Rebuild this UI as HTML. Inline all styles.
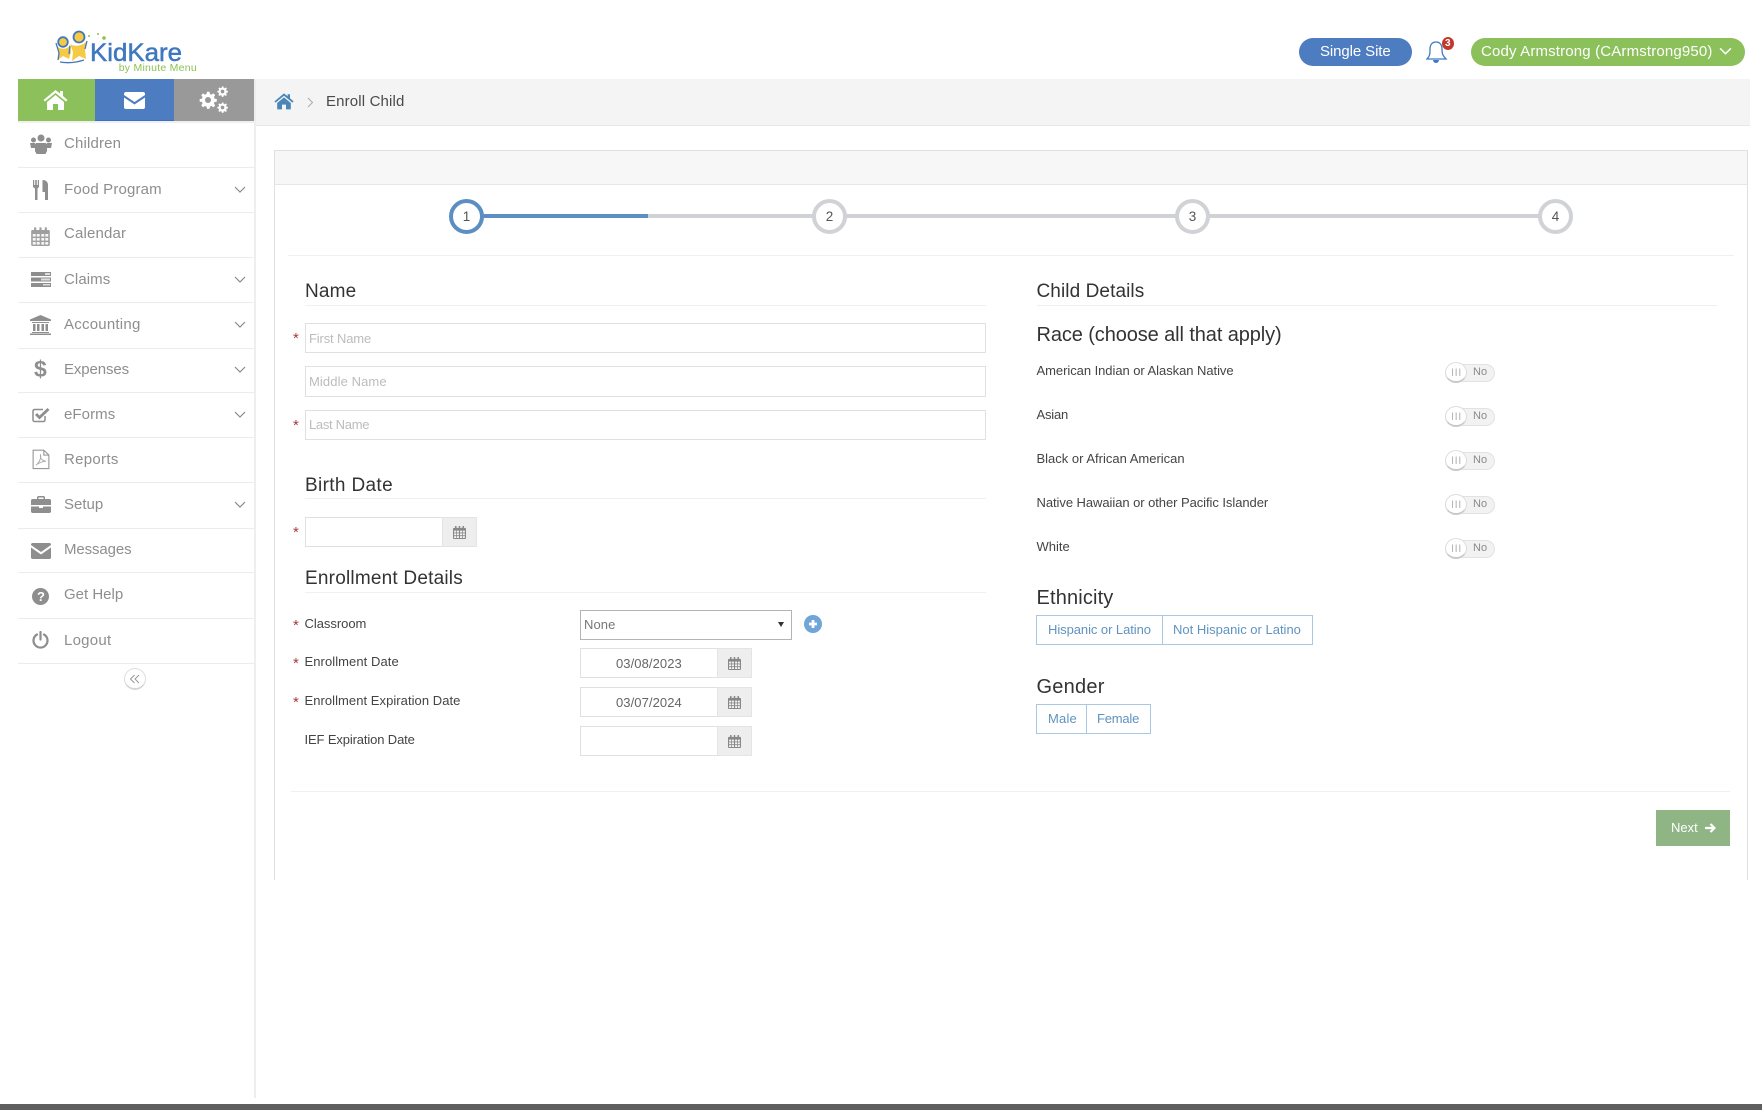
<!DOCTYPE html>
<html lang="en"><head><meta charset="utf-8"><title>Enroll Child</title>
<style>
html,body{margin:0;padding:0;background:#fff}
#r{position:relative;width:1762px;height:1110px;overflow:hidden;background:#fff;font-family:"Liberation Sans",sans-serif;filter:blur(.35px)}
#r div,#r svg{position:absolute}
.t{position:absolute;white-space:nowrap;line-height:20px;height:20px;margin-top:-10px}
.m{font-size:15px;color:#8e8e8e;left:64px;letter-spacing:.16px;margin-top:-9px}
.sep{left:18px;width:236px;height:1px;background:#ececec}
.h{font-size:19px;color:#333}
.rule{height:1px;background:#f0f0f0}
.inp{box-sizing:border-box;border:1px solid #e0e0e0;background:#fff}
.ph{font-size:13px;color:#bcbcbc;left:309px;margin-top:-9px}
.req{font-size:15px;color:#a83a3b;left:293px;margin-top:-11px}
.l{font-size:13px;color:#444;margin-top:-10px}
.add{background:#eee;border:1px solid #e4e4e4;box-sizing:border-box}
.tg{box-sizing:border-box;left:1445px;width:50px;height:18px;border-radius:9px;background:#f2f2f2;border:1px solid #e2e2e2}
.kn{box-sizing:border-box;left:1445px;width:22px;height:21px;border-radius:50%;background:#fff;border:1px solid #ddd;border-bottom:2px solid #c9c9c9}
.no{font-size:11px;color:#8a8a8a;left:1473px}
.bars{font-size:11px;color:#b4b4b4;left:1451px;letter-spacing:.6px;margin-top:-9px}
.b{box-sizing:border-box;border:1px solid #a9c8e4;background:#fff;height:30px}
.bt{font-size:13px;color:#5f93c0;margin-top:-9.500px}
.d{font-size:13px;color:#666;letter-spacing:.08px}
.st{box-sizing:border-box;width:35px;height:35px;border-radius:50%;border:4px solid #d0d2d6;background:#fff;top:199px}
.sn{font-size:13.500px;color:#555;width:20px;text-align:center}
</style></head><body><div id="r">
<svg width="0" height="0" style="left:0;top:0"><defs>
<symbol id="cal" viewBox="0 0 14 15"><path d="M1 3h12a1 1 0 0 1 1 1v10a1 1 0 0 1-1 1H1a1 1 0 0 1-1-1V4a1 1 0 0 1 1-1z" fill="#888"/><path d="M3 1v3M7 1v3M11 1v3" stroke="#888" stroke-width="1.600"/><path d="M1.200 6h2.200v2H1.200zM4.200 6h2.200v2H4.200zM7.600 6h2.200v2H7.600zM10.600 6h2.200v2h-2.200zM1.200 9h2.200v2H1.200zM4.200 9h2.200v2H4.200zM7.600 9h2.200v2H7.600zM10.600 9h2.200v2h-2.200zM1.200 12h2.200v2H1.200zM4.200 12h2.200v2H4.200zM7.600 12h2.200v2H7.600zM10.600 12h2.200v2h-2.200z" fill="#f4f4f4"/></symbol>
<symbol id="chev" viewBox="0 0 12 7"><path d="M1 1l5 5 5-5" fill="none" stroke="#8a8a8a" stroke-width="1.200"/></symbol>
<symbol id="gear" viewBox="0 0 24 24"><path d="M12 1l2 0 .6 3 2 .8 2.600-1.700 2.400 2.400-1.700 2.600.8 2 3 .6 0 3.400-3 .6-.8 2 1.700 2.600-2.400 2.400-2.600-1.700-2 .8-.6 3-3.400 0-.6-3-2-.8-2.600 1.700-2.400-2.400 1.700-2.600-.8-2-3-.6 0-3.400 3-.6.8-2-1.700-2.600 2.400-2.400 2.600 1.700 2-.8.6-3z" fill="#fff"/><circle cx="12" cy="12" r="4" fill="#999"/></symbol>
</defs></svg>

<!-- logo -->
<svg style="left:50px;top:26px" width="155" height="50" viewBox="0 0 155 50">
<path d="M6 19C10 24 17 24 20 19L21 26 19 33 13 30 8 34 9 27Z" fill="#f7ca45"/>
<path d="M20 18C24 21 33 20 37 15L35 24 36 33 29 30 22 35 23 26Z" fill="#f7ca45"/>
<circle cx="13" cy="16" r="4.800" fill="#f7ca45" stroke="#3f78bf" stroke-width="1.800"/>
<circle cx="29" cy="11" r="5.500" fill="#f7ca45" stroke="#3f78bf" stroke-width="1.800"/>
<path d="M6 17L9 27 8 34M20 20L19 28M10 36Q22 38 34 34M37 15L35 23" fill="none" stroke="#3f78bf" stroke-width="1.300"/>
<circle cx="39" cy="10" r="1" fill="#8cc152"/><circle cx="48" cy="8" r="1" fill="#8cc152"/><circle cx="54" cy="12" r="1.800" fill="#8cc152"/>
<text x="40" y="35" font-family="Liberation Sans" font-size="25" stroke="#3f78bf" stroke-width=".5" fill="#3f78bf" textLength="92" lengthAdjust="spacingAndGlyphs">KidKare</text>
<text x="68.700" y="45" font-family="Liberation Sans" font-size="10.500" fill="#8cc152" textLength="78">by Minute Menu</text>
</svg>

<!-- top right -->
<div style="left:1299px;top:38px;width:113px;height:28px;border-radius:14px;background:#4d7cc1"></div>
<span class="t" style="left:1320px;top:52px;font-size:15px;color:#fff;letter-spacing:-.1px">Single Site</span>
<svg style="left:1426px;top:40px" width="22" height="24" viewBox="0 0 22 24"><path d="M10 2c4 0 6 3 6 7 0 5 1 7 4 10H1c3-3 3-5 3-10 0-4 2-7 6-7z" fill="#fff" stroke="#3f78c8" stroke-width="1.300"/><path d="M7 20a3 3 0 0 0 6 0z" fill="#3f78c8"/></svg>
<div style="left:1442px;top:37px;width:12px;height:13px;border-radius:50%;background:#c0392b"></div>
<span class="t" style="left:1445px;top:44px;font-size:10px;color:#fff;font-weight:700">3</span>
<div style="left:1471px;top:38px;width:274px;height:28px;border-radius:14px;background:#8bc05a"></div>
<span class="t" style="left:1481px;top:52px;font-size:15px;color:#fff;letter-spacing:.16px">Cody Armstrong (CArmstrong950)</span>
<svg style="left:1719px;top:47px" width="13" height="8" viewBox="0 0 12 7"><path d="M1 1l5 5 5-5" fill="none" stroke="#fff" stroke-width="1.400"/></svg>

<!-- nav tiles -->
<div style="left:18px;top:79px;width:77px;height:42px;background:#8bc05a"></div>
<div style="left:95px;top:79px;width:79px;height:42px;background:#4d7cc1;border-bottom:1px solid #3b6fc0;box-sizing:border-box"></div>
<div style="left:174px;top:79px;width:80px;height:42px;background:#999"></div>
<div style="left:18px;top:121px;width:236px;height:2px;background:#efefef"></div>
<svg style="left:43px;top:89px" width="25" height="21" viewBox="0 0 25 21"><path d="M12.500 1L0.500 11l1.500 1.500L12.500 4 23 12.500 24.500 11 20 7V2h-3v2.500z" fill="#fff"/><path d="M4 13l8.500-7 8.500 7v8h-6v-6h-5v6H4z" fill="#fff"/></svg>
<svg style="left:124px;top:92px" width="21" height="17" viewBox="0 0 21 17"><path d="M2 0h17a2 2 0 0 1 2 2v1l-10.500 7L0 3V2a2 2 0 0 1 2-2z" fill="#fff"/><path d="M0 5.500l10.500 7 10.500-7V15a2 2 0 0 1-2 2H2a2 2 0 0 1-2-2z" fill="#fff"/></svg>
<svg style="left:199px;top:86px" width="31" height="28" viewBox="0 0 31 28"><use href="#gear" x="0" y="5" width="18" height="18"/><use href="#gear" x="18" y="0" width="11" height="11"/><use href="#gear" x="18" y="16" width="11" height="11"/></svg>

<!-- sidebar -->
<div style="left:254px;top:79px;width:2px;height:1019px;background:#eee"></div>
<span class="t m" style="top:143px">Children</span><div class="sep" style="top:167px"></div>
<span class="t m" style="top:189px">Food Program</span><div class="sep" style="top:212px"></div>
<span class="t m" style="top:233px">Calendar</span><div class="sep" style="top:257px"></div>
<span class="t m" style="top:279px;letter-spacing:.08px">Claims</span><div class="sep" style="top:302px"></div>
<span class="t m" style="top:324px;letter-spacing:.23px">Accounting</span><div class="sep" style="top:348px"></div>
<span class="t m" style="top:369px;letter-spacing:-.1px">Expenses</span><div class="sep" style="top:392px"></div>
<span class="t m" style="top:414px;letter-spacing:.08px">eForms</span><div class="sep" style="top:437px"></div>
<span class="t m" style="top:459px;letter-spacing:.3px">Reports</span><div class="sep" style="top:482px"></div>
<span class="t m" style="top:504px;letter-spacing:0">Setup</span><div class="sep" style="top:528px"></div>
<span class="t m" style="top:549px;letter-spacing:-.1px">Messages</span><div class="sep" style="top:572px"></div>
<span class="t m" style="top:594px;letter-spacing:0">Get Help</span><div class="sep" style="top:618px"></div>
<span class="t m" style="top:640px;letter-spacing:.25px">Logout</span><div class="sep" style="top:663px"></div>

<svg style="left:234px;top:186px" width="12" height="7"><use href="#chev"/></svg>
<svg style="left:234px;top:276px" width="12" height="7"><use href="#chev"/></svg>
<svg style="left:234px;top:321px" width="12" height="7"><use href="#chev"/></svg>
<svg style="left:234px;top:366px" width="12" height="7"><use href="#chev"/></svg>
<svg style="left:234px;top:411px" width="12" height="7"><use href="#chev"/></svg>
<svg style="left:234px;top:501px" width="12" height="7"><use href="#chev"/></svg>

<!-- sidebar icons -->
<svg style="left:30px;top:134px" width="22" height="20" viewBox="0 0 22 20" fill="#8e8e8e"><circle cx="11" cy="4" r="3.500"/><circle cx="3.500" cy="6" r="2.500"/><circle cx="18.500" cy="6" r="2.500"/><path d="M0 9h5l1 5H1zM17 9h5l-1 5h-5zM6 9h10l1 2v6l-1.500 3h-9L5 17v-6z"/></svg>
<svg style="left:33px;top:180px" width="16" height="20" viewBox="0 0 16 20" fill="#8e8e8e"><path d="M0 0h1.200v5h1V0h1.600v5h1V0H6v7l-1.500 1.500V20H2V8.500L0 7z"/><path d="M9.500 0c3.500 0 5.500 2 5.500 5v15h-3v-8H9.500z"/></svg>
<svg style="left:31px;top:226px;opacity:.8" width="19" height="20"><use href="#cal" width="19" height="20"/></svg>
<svg style="left:31px;top:272px" width="20" height="15" viewBox="0 0 20 15" fill="#8e8e8e"><path d="M0 0h20v4H0zM0 5.500h20v4H0zM0 11h20v4H0z"/><path d="M14 1h5v2h-5zM10 6.500h9v2h-9zM12 12h7v1.500h-7z" fill="#ddd"/></svg>
<svg style="left:30px;top:315px" width="21" height="20" viewBox="0 0 21 20" fill="#8e8e8e"><path d="M10.500 0L21 4.500V6H0V4.500z"/><path d="M2 7h17v1H2zM3 9h2.500v7H3zM7 9h2.500v7H7zM11.500 9H14v7h-2.500zM15.500 9H18v7h-2.500zM2 17h17v1H2zM0 18.500h21V20H0z"/></svg>
<span class="t" style="left:34px;top:369px;font-size:23px;font-weight:700;color:#8e8e8e">$</span>
<svg style="left:32px;top:407px" width="18" height="16" viewBox="0 0 18 16"><path d="M13 9v4a1.500 1.500 0 0 1-1.500 1.500h-9A1.500 1.500 0 0 1 1 13V4a1.500 1.500 0 0 1 1.500-1.500H11" fill="none" stroke="#8e8e8e" stroke-width="1.500"/><path d="M4 7l3.500 3.500L16.500 2" fill="none" stroke="#8e8e8e" stroke-width="2.800"/></svg>
<svg style="left:32px;top:449px" width="18" height="21" viewBox="0 0 16 18"><path d="M1 .7h9.500L15 5v12H1z" fill="#fff" stroke="#999"/><path d="M10.500 1v4H15" fill="none" stroke="#999"/><path d="M3.500 14c3-2 5-7 4-9-.5 3 2 5.500 5 5.500-3 .2-6 1-9 3.500z" fill="none" stroke="#a5a5a5" stroke-width=".8"/></svg>
<svg style="left:31px;top:496px" width="20" height="17" viewBox="0 0 20 17" fill="#8e8e8e"><path d="M6 3V1.500C6 .7 6.700 0 7.500 0h5c.8 0 1.500.7 1.500 1.500V3h-1.500V1.500h-5V3z"/><path d="M1.500 3h17c.8 0 1.500.7 1.500 1.500V9H0V4.500C0 3.700.7 3 1.500 3zM0 10.500h8V12h4v-1.500h8v5c0 .8-.7 1.500-1.500 1.500h-17C.7 17 0 16.300 0 15.500z"/></svg>
<svg style="left:31px;top:543px" width="20" height="16" viewBox="0 0 20 16" fill="#8e8e8e"><path d="M1 0h18l1 1v1l-10 7L0 2V1zM0 4.500l10 7 10-7V14.500c0 .8-.7 1.500-1.500 1.500h-17C.7 16 0 15.300 0 14.500z"/></svg>
<div style="left:32px;top:588px;width:17px;height:17px;border-radius:50%;background:#8e8e8e"></div>
<span class="t" style="left:37px;top:597px;font-size:13px;font-weight:700;color:#fff">?</span>
<svg style="left:32px;top:631px" width="17" height="18" viewBox="0 0 17 18"><path d="M5 3.500a7 7 0 1 0 7 0" fill="none" stroke="#8e8e8e" stroke-width="2.200" stroke-linecap="round"/><path d="M8.500 1v7.500" stroke="#8e8e8e" stroke-width="2.200" stroke-linecap="round"/></svg>

<div style="left:124px;top:668px;width:22px;height:22px;box-sizing:border-box;border-radius:50%;border:1px solid #ddd;border-bottom:2px solid #d5d5d5"></div>
<svg style="left:130px;top:674px" width="10" height="10" viewBox="0 0 10 10"><path d="M4.500 1l-4 4 4 4M9 1L5 5l4 4" fill="none" stroke="#999"/></svg>

<!-- breadcrumb -->
<div style="left:256px;top:79px;width:1494px;height:47px;background:#f4f4f4;border-bottom:1px solid #e8e8e8;box-sizing:border-box"></div>
<svg style="left:274px;top:92px" width="20" height="18" viewBox="0 0 25 21"><path d="M12.500 1L0.500 11l1.500 1.500L12.500 4 23 12.500 24.500 11 20 7V2h-3v2.500z" fill="#4a86b8"/><path d="M4 13l8.500-7 8.500 7v8h-6v-6h-5v6H4z" fill="#4a86b8"/></svg>
<svg style="left:307px;top:97px" width="7" height="11" viewBox="0 0 7 11"><path d="M1 1l4.500 4.500L1 10" fill="none" stroke="#aaa"/></svg>
<span class="t" style="left:326px;top:102px;font-size:15px;color:#4a4a4a;letter-spacing:.15px">Enroll Child</span>

<!-- panel -->
<div style="left:274px;top:150px;width:1474px;height:35px;background:#f7f7f7;border:1px solid #e0e0e0;border-bottom:1px solid #e6e6e6;box-sizing:border-box"></div>
<div style="left:274px;top:185px;width:1px;height:695px;background:#e0e0e0"></div>
<div style="left:1747px;top:185px;width:1px;height:695px;background:#e0e0e0"></div>

<!-- stepper -->
<div style="left:466px;top:214px;width:1090px;height:4px;background:#d0d2d6"></div>
<div style="left:466px;top:214px;width:182px;height:4px;background:#5b8fc4"></div>
<div class="st" style="left:449px;border-color:#5b8fc4"></div><span class="t sn" style="left:456.500px;top:216.500px">1</span>
<div class="st" style="left:812px"></div><span class="t sn" style="left:819.500px;top:216.500px">2</span>
<div class="st" style="left:1175px"></div><span class="t sn" style="left:1182.500px;top:216.500px">3</span>
<div class="st" style="left:1538px"></div><span class="t sn" style="left:1545.500px;top:216.500px">4</span>
<div class="rule" style="left:288px;top:255px;width:1446px"></div>

<!-- left col -->
<span class="t h" style="left:305px;top:292px;letter-spacing:.15px">Name</span><div class="rule" style="left:305px;top:305px;width:681px"></div>
<div class="inp" style="left:305px;top:323px;width:681px;height:30px"></div>
<div class="inp" style="left:305px;top:366px;width:681px;height:31px"></div>
<div class="inp" style="left:305px;top:410px;width:681px;height:30px"></div>
<span class="t req" style="top:340px">*</span><span class="t ph" style="top:338px;letter-spacing:-.15px">First Name</span>
<span class="t ph" style="top:381px;letter-spacing:.1px">Middle Name</span>
<span class="t req" style="top:427px">*</span><span class="t ph" style="top:424px;letter-spacing:-.3px">Last Name</span>

<span class="t h" style="left:305px;top:486px;letter-spacing:.35px">Birth Date</span><div class="rule" style="left:305px;top:498px;width:681px"></div>
<span class="t req" style="top:534px">*</span>
<div class="inp" style="left:305px;top:517px;width:138px;height:30px"></div>
<div class="add" style="left:442px;top:517px;width:35px;height:30px"></div>
<svg style="left:453px;top:525px" width="13" height="14"><use href="#cal" width="13" height="14"/></svg>

<span class="t h" style="left:305px;top:579px;letter-spacing:.21px">Enrollment Details</span><div class="rule" style="left:305px;top:592px;width:681px"></div>
<span class="t req" style="top:627px">*</span><span class="t l" style="left:304.500px;top:624px;letter-spacing:-.03px">Classroom</span>
<span class="t req" style="top:665px">*</span><span class="t l" style="left:304.500px;top:662px;letter-spacing:.07px">Enrollment Date</span>
<span class="t req" style="top:704px">*</span><span class="t l" style="left:304.500px;top:701px;letter-spacing:.05px">Enrollment Expiration Date</span>
<span class="t l" style="left:304.500px;top:740px;letter-spacing:-.13px">IEF Expiration Date</span>
<div class="inp" style="left:580px;top:610px;width:212px;height:30px;border-color:#b4b4b4"></div>
<span class="t d" style="left:584px;top:625px;color:#777">None</span>
<svg style="left:778px;top:622px" width="6" height="5" viewBox="0 0 6 5"><path d="M0 0h6L3 5z" fill="#333"/></svg>
<div style="left:804px;top:615px;width:18px;height:18px;border-radius:50%;background:#6fa5d8"></div>
<svg style="left:807px;top:618px" width="12" height="12"><path d="M6 2v8M2 6h8" stroke="#fff" stroke-width="2.800"/></svg>

<div class="inp" style="left:580px;top:648px;width:138px;height:30px"></div><div class="add" style="left:717px;top:648px;width:35px;height:30px"></div>
<svg style="left:728px;top:656px" width="13" height="14"><use href="#cal" width="13" height="14"/></svg>
<span class="t d" style="left:616px;top:664px">03/08/2023</span>
<div class="inp" style="left:580px;top:687px;width:138px;height:30px"></div><div class="add" style="left:717px;top:687px;width:35px;height:30px"></div>
<svg style="left:728px;top:695px" width="13" height="14"><use href="#cal" width="13" height="14"/></svg>
<span class="t d" style="left:616px;top:703px">03/07/2024</span>
<div class="inp" style="left:580px;top:726px;width:138px;height:30px"></div><div class="add" style="left:717px;top:726px;width:35px;height:30px"></div>
<svg style="left:728px;top:734px" width="13" height="14"><use href="#cal" width="13" height="14"/></svg>

<!-- right col -->
<span class="t h" style="left:1036.500px;top:292px;letter-spacing:.09px">Child Details</span><div class="rule" style="left:1037px;top:305px;width:680px"></div>
<span class="t" style="left:1036.500px;top:335px;font-size:20px;color:#333;letter-spacing:-.1px">Race (choose all that apply)</span>
<span class="t l" style="left:1036.500px;top:371px;letter-spacing:-.05px">American Indian or Alaskan Native</span>
<span class="t l" style="left:1036.500px;top:415px;letter-spacing:-.2px">Asian</span>
<span class="t l" style="left:1036.500px;top:459px;letter-spacing:0">Black or African American</span>
<span class="t l" style="left:1036.500px;top:503px;letter-spacing:-.06px">Native Hawaiian or other Pacific Islander</span>
<span class="t l" style="left:1036.500px;top:547px">White</span>

<div class="tg" style="top:364px"></div><div class="kn" style="top:362px"></div><span class="t bars" style="top:372px">III</span><span class="t no" style="top:372px">No</span>
<div class="tg" style="top:408px"></div><div class="kn" style="top:406px"></div><span class="t bars" style="top:416px">III</span><span class="t no" style="top:416px">No</span>
<div class="tg" style="top:452px"></div><div class="kn" style="top:450px"></div><span class="t bars" style="top:460px">III</span><span class="t no" style="top:460px">No</span>
<div class="tg" style="top:495.500px"></div><div class="kn" style="top:493.500px"></div><span class="t bars" style="top:503.500px">III</span><span class="t no" style="top:504px">No</span>
<div class="tg" style="top:539.500px"></div><div class="kn" style="top:537.500px"></div><span class="t bars" style="top:547.500px">III</span><span class="t no" style="top:548px">No</span>

<span class="t" style="left:1036.500px;top:598px;font-size:20px;color:#333;letter-spacing:.15px">Ethnicity</span>
<div class="b" style="left:1036px;top:615px;width:127px"></div><div class="b" style="left:1162px;top:615px;width:151px"></div>
<span class="t bt" style="left:1048px;top:629px;letter-spacing:-.06px">Hispanic or Latino</span><span class="t bt" style="left:1173px;top:629px;letter-spacing:0">Not Hispanic or Latino</span>
<span class="t" style="left:1036.500px;top:687px;font-size:20px;color:#333;letter-spacing:.25px">Gender</span>
<div class="b" style="left:1036px;top:704px;width:51px"></div><div class="b" style="left:1086px;top:704px;width:65px"></div>
<span class="t bt" style="left:1048px;top:718px;letter-spacing:.2px">Male</span><span class="t bt" style="left:1097px;top:718px;letter-spacing:-.2px">Female</span>

<div class="rule" style="left:291px;top:791px;width:1439px"></div>
<div style="left:1656px;top:810px;width:74px;height:36px;background:#8fb584"></div>
<span class="t" style="left:1671px;top:828px;font-size:13px;color:#fff">Next</span>
<svg style="left:1704px;top:822px" width="12" height="12" viewBox="0 0 12 12"><path d="M1 6h9M6.500 2l4 4-4 4" fill="none" stroke="#fff" stroke-width="2.200"/></svg>

<!-- bottom bar -->
<div style="left:0;top:1104px;width:1762px;height:6px;background:#5f5f5f"></div>
</div></body></html>
